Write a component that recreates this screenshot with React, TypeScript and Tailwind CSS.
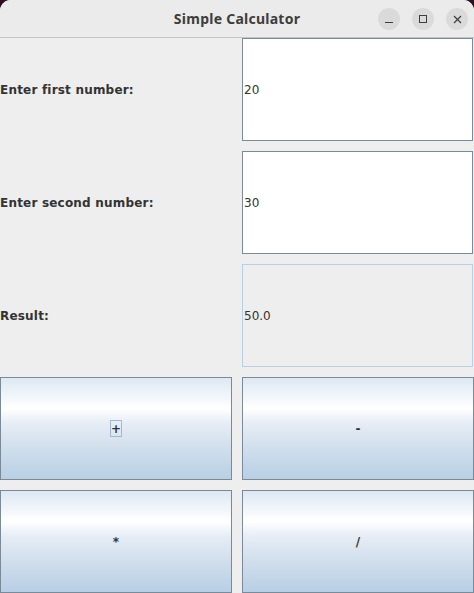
import React from "react";

const btnBg =
  "bg-[linear-gradient(to_bottom,#dde8f3_0%,#ffffff_30%,#e6edf6_45%,#d0deec_70%,#b8cfe5_100%)]";

function CalcButton({ label, focused }: { label: string; focused?: boolean }) {
  return (
    <div
      className={`flex items-center justify-center border border-[#7a8a99] ${btnBg} text-[12px] font-bold text-[#333333]`}
      style={{ fontFamily: '"DejaVu Sans", sans-serif' }}
    >
      {focused ? (
        <span className="flex h-[17px] w-[12px] items-center justify-center border border-[#a3b8cc] leading-none">
          {label}
        </span>
      ) : (
        <span className="leading-none">{label}</span>
      )}
    </div>
  );
}

export default function App() {
  const dv = { fontFamily: '"DejaVu Sans", sans-serif' };
  const label = "flex items-center text-[12px] font-bold tracking-[0.2px] text-[#333333]";
  return (
    <div className="h-[593px] w-[474px] overflow-hidden bg-[#2c0f22]">
      <div className="flex h-full flex-col overflow-hidden rounded-t-[11px] bg-[#eeeeee]">
        <div className="relative flex h-[38px] shrink-0 items-center justify-center border-b border-[#c4c4c4] bg-[#ebebeb]">
          <span
            className="text-[14px] font-bold tracking-[0.25px] text-[#3d3d3d]"
            style={{ fontFamily: '"Noto Sans", "DejaVu Sans", sans-serif' }}
          >
            Simple Calculator
          </span>
          <div className="absolute right-[6px] top-[8px] flex gap-[12px]">
            <div className="flex h-[22px] w-[22px] items-center justify-center rounded-full bg-[#dadada]">
              <div className="mt-[6px] h-[1px] w-[8px] bg-[#3d3d3d]" />
            </div>
            <div className="flex h-[22px] w-[22px] items-center justify-center rounded-full bg-[#dadada]">
              <div className="h-[8px] w-[8px] border border-[#3d3d3d]" />
            </div>
            <div className="flex h-[22px] w-[22px] items-center justify-center rounded-full bg-[#dadada]">
              <svg width="9" height="9" viewBox="0 0 9 9">
                <path d="M1 1L8 8M8 1L1 8" stroke="#3d3d3d" strokeWidth="1.2" />
              </svg>
            </div>
          </div>
        </div>
        <div
          className="grid flex-1 grid-cols-2 grid-rows-5 gap-[10px] bg-[#eeeeee]"
          style={dv}
        >
          <div className={label}>Enter first number:</div>
          <div className="mr-[1px] flex items-center border border-[#7a8a99] bg-white pl-[1px] text-[12px] text-[#333333]">
            20
          </div>
          <div className={label}>Enter second number:</div>
          <div className="mr-[1px] flex items-center border border-[#7a8a99] bg-white pl-[1px] text-[12px] text-[#333333]">
            30
          </div>
          <div className={label}>Result:</div>
          <div className="mr-[1px] flex items-center border border-[#b8cfe5] bg-[#eeeeee] pl-[1px] text-[12px] text-[#333333]">
            50.0
          </div>
          <CalcButton label="+" focused />
          <CalcButton label="-" />
          <CalcButton label="*" />
          <CalcButton label="/" />
        </div>
      </div>
    </div>
  );
}
